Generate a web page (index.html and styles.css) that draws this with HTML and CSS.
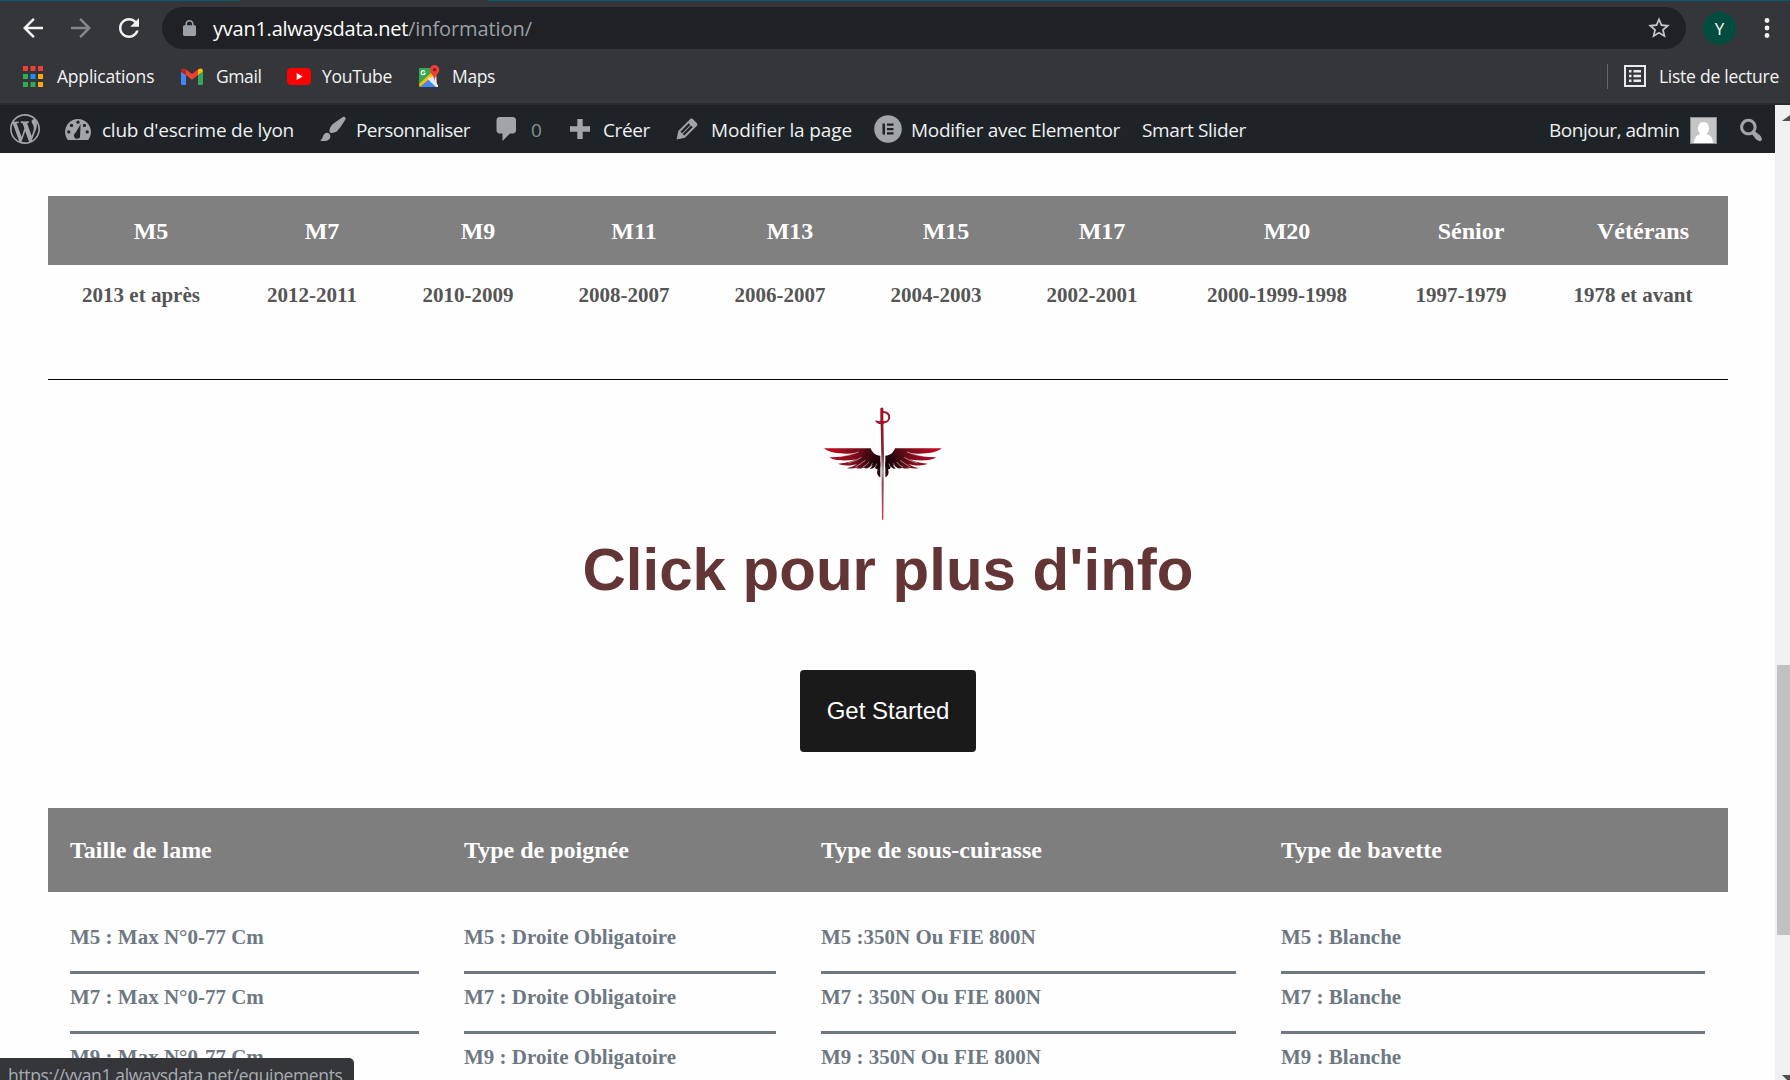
FILE: index.html
```html
<!DOCTYPE html>
<html lang="fr">
<head>
<meta charset="utf-8">
<title>Information – club d'escrime de lyon</title>
<link rel="stylesheet" href="styles.css">
</head>
<body>
<header class="browser">
  <div class="tabstrip"><i></i><b></b></div>
  <div class="toolbar">
    <svg class="nav" viewBox="0 0 24 24"><path fill="#f1f3f4" d="M20 11H7.83l5.59-5.59L12 4l-8 8 8 8 1.41-1.41L7.83 13H20v-2z"/></svg>
    <svg class="nav forward" viewBox="0 0 24 24"><path fill="#85868a" d="M4 11h12.17l-5.59-5.59L12 4l8 8-8 8-1.41-1.41L16.17 13H4v-2z"/></svg>
    <svg class="nav reload" viewBox="0 0 24 24"><path fill="#f1f3f4" d="M17.65 6.35C16.2 4.9 14.21 4 12 4c-4.42 0-7.99 3.58-7.99 8s3.57 8 7.99 8c3.73 0 6.84-2.55 7.73-6h-2.08c-.82 2.33-3.04 4-5.65 4-3.31 0-6-2.69-6-6s2.69-6 6-6c1.66 0 3.14.69 4.22 1.78L13 11h7V4l-2.35 2.35z"/></svg>
    <div class="omnibox">
      <svg class="lock" viewBox="4 1 16 21" preserveAspectRatio="none"><path fill="#9aa0a6" d="M18 8h-1V6c0-2.76-2.24-5-5-5S7 3.24 7 6v2H6c-1.1 0-2 .9-2 2v10c0 1.1.9 2 2 2h12c1.1 0 2-.9 2-2V10c0-1.1-.9-2-2-2zM8.9 6c0-1.71 1.39-3.1 3.1-3.1s3.1 1.39 3.1 3.1v2H8.9V6z"/></svg>
      <span class="host">yvan1.alwaysdata.net</span><span class="path">/information/</span>
      <svg class="star" viewBox="0 0 24 24"><path fill="#c4c7ca" d="M22 9.24l-7.19-.62L12 2 9.19 8.63 2 9.24l5.46 4.73L5.82 21 12 17.27 18.18 21l-1.63-7.03L22 9.24zM12 15.4l-3.76 2.27 1-4.28-3.32-2.88 4.38-.38L12 6.1l1.71 4.04 4.38.38-3.32 2.88 1 4.28L12 15.4z"/></svg>
    </div>
    <span class="profile">Y</span>
    <svg class="dots" viewBox="0 0 6 22"><g fill="#f1f3f4"><circle cx="3" cy="3.5" r="2.4"/><circle cx="3" cy="11" r="2.4"/><circle cx="3" cy="18.5" r="2.4"/></g></svg>
  </div>
  <nav class="bookmarks">
    <svg class="apps" viewBox="0 0 20 21"><g fill="#ea4335"><path d="M0 0h5v5H0zM7.5 0h5v5h-5zM15 0h5v5h-5z"/></g><path fill="#34a853" d="M0 8h5v5H0zM0 16h5v5H0zM7.500 16h5v5h-5z"/><path fill="#1a90ff" d="M7.500 8h5v5h-5z"/><path fill="#fba80b" d="M15 8h5v5h-5zM15 16h5v5h-5z"/></svg>
    <span class="bm-apps">Applications</span>
    <svg class="gmail" viewBox="0 0 22 17"><path fill="#4285f4" d="M0 3.500V15.500Q0 17 1.500 17H5V7z"/><path fill="#34a853" d="M22 3.500V15.500Q22 17 20.500 17H17V7z"/><path fill="#ea4335" d="M5 1.500l6 4.600 6-4.600V7l-6 4.700L5 7z"/><path fill="#c5221f" d="M0 3.300C0 .5 2.600-.6 5 1.500V7L0 3.500z"/><path fill="#fbbc04" d="M22 3.300C22 .5 19.400-.6 17 1.500V7l5-3.500z"/></svg>
    <span class="bm-gmail">Gmail</span>
    <svg class="youtube" viewBox="0 0 24 17"><rect width="24" height="17" rx="4.200" fill="#f00"/><path fill="#fff" d="M9.700 5l6 3.500-6 3.500z"/></svg>
    <span class="bm-youtube">YouTube</span>
    <svg class="maps" viewBox="0 0 22 23"><path fill="#34a853" d="M2 3h13v9L1 22V4q0-1 1-1z"/><path fill="#4285f4" d="M2 22l8.500-8L19 22z"/><path fill="#e8eaed" d="M12 13l6-6 1 14.500z"/><path fill="#fbbc04" d="M1 19L14 7l2.500 2.500L2 22z"/><path fill="#e8eaed" d="M9.500 14l2-2L20 20v2h-2z"/><path fill="none" stroke="#fff" stroke-width="1.200" d="M6.800 6.500a2 2 0 1 0 .3 1.800H5.500"/><path fill="#ea4335" d="M16.500 0a4.800 4.800 0 0 1 4.800 4.800c0 3.700-4.200 5-4.800 11-.6-6-4.800-7.300-4.800-11A4.800 4.800 0 0 1 16.500 0z"/><circle cx="16.500" cy="4.800" r="1.700" fill="#8c1d18"/></svg>
    <span class="bm-maps">Maps</span>
    <span class="reading">
      <svg viewBox="0 0 22 22"><rect x="1" y="1" width="20" height="20" fill="none" stroke="#e8eaed" stroke-width="2"/><path fill="#e8eaed" d="M5 5h2.500v2.500H5zM9.500 5H17v2.500H9.500zM5 9.800h2.500v2.500H5zM9.500 9.800H17v2.500H9.500zM5 14.600h2.500v2.500H5zM9.500 14.600H17v2.500H9.500z"/></svg>
      <span class="bm-list">Liste de lecture</span>
    </span>
  </nav>
</header>
<div class="viewport">
  <div class="page">
    <nav class="adminbar">
      <svg class="wp" viewBox="0 0 20 20"><path d="M20 10c0-5.510-4.490-10-10-10C4.480 0 0 4.490 0 10c0 5.520 4.480 10 10 10 5.510 0 10-4.480 10-10zM7.780 15.370L4.370 6.220c.55-.02 1.170-.08 1.170-.08.5-.06.44-1.130-.06-1.110 0 0-1.450.11-2.370.11-.18 0-.37 0-.58-.01C4.120 2.690 6.870 1.110 10 1.110c2.330 0 4.450.87 6.050 2.340-.68-.11-1.650.39-1.650 1.580 0 .74.45 1.360.9 2.100.35.61.55 1.360.55 2.460 0 1.490-1.400 5-1.400 5l-3.030-8.370c.54-.02.82-.17.82-.17.5-.05.44-1.250-.06-1.220 0 0-1.440.12-2.380.12-.87 0-2.330-.12-2.330-.12-.5-.03-.56 1.200-.06 1.220l.92.08 1.260 3.410zM17.410 10c.24-.64.74-1.870.43-4.250.7 1.290 1.050 2.710 1.050 4.250 0 3.290-1.730 6.240-4.400 7.780.97-2.590 1.940-5.200 2.920-7.780zM6.100 18.090C3.120 16.650 1.110 13.530 1.110 10c0-1.300.23-2.480.72-3.590C3.250 10.300 4.670 14.200 6.100 18.090zm4.030-6.630l2.580 6.980c-.86.29-1.760.45-2.710.45-.79 0-1.570-.11-2.290-.33.81-2.380 1.620-4.740 2.420-7.100z"/></svg>
      <svg class="dash" viewBox="2 4 16 13"><path d="M3.760 17h12.480c1.100-1.370 1.760-3.110 1.760-5 0-4.420-3.580-8-8-8s-8 3.580-8 8c0 1.890.66 3.630 1.760 5z"/><g fill="#1d2327"><circle cx="10" cy="6" r="1"/><circle cx="6" cy="8" r="1"/><circle cx="14" cy="8" r="1"/><circle cx="4.300" cy="12" r="1"/><circle cx="15.700" cy="12" r="1"/><path d="M11.600 7.200l-.3 6.800a1.900 1.900 0 1 1-2.900-1.300z"/></g></svg>
      <span class="ab-site">club d'escrime de lyon</span>
      <svg class="i30 brush" viewBox="0 0 20 20"><path d="M18.330 3.570s.27-.8-.31-1.360c-.53-.52-1.220-.24-1.220-.24-.61.3-5.760 3.470-7.670 5.570-.86.96-2.060 3.790-1.090 4.820.92.98 3.960-.17 4.790-1 2.060-2.060 5.210-7.170 5.500-7.790zM1.400 17.650c2.370-1.560 1.460-3.410 3.230-4.640.93-.65 2.220-.62 3.080.29.63.67.8 2.570-.16 3.460-1.570 1.450-4 1.550-6.150.89z"/></svg>
      <span class="ab-perso">Personnaliser</span>
      <svg class="i30 comment" viewBox="0 0 20 20"><path d="M5 2h9c1.100 0 2 .9 2 2v7c0 1.100-.9 2-2 2h-2l-5 5v-5H5c-1.100 0-2-.9-2-2V4c0-1.100.9-2 2-2z"/></svg>
      <span class="ab-count">0</span>
      <svg class="plus" viewBox="0 0 20 20"><path d="M7.300 0h5.400v7.300H20v5.400h-7.300V20H7.300v-7.300H0V7.300h7.300z"/></svg>
      <span class="ab-new">Créer</span>
      <svg class="i30 pencil" viewBox="0 0 20 20"><path d="M13.890 3.390l2.710 2.720c.46.46.42 1.240.03 1.640l-8.010 8.020-5.560 1.160 1.160-5.580s7.600-7.630 7.990-8.030c.39-.39 1.220-.39 1.680.07zm-2.730 2.790l-5.590 5.610 1.110 1.110 5.540-5.650zm-2.970 8.230l5.580-5.600-1.070-1.080-5.590 5.600z"/></svg>
      <span class="ab-edit">Modifier la page</span>
      <svg class="elementor" viewBox="0 0 28 28"><circle cx="14" cy="14" r="13.800"/><path fill="#1d2327" d="M8.500 8.500h2.500v11H8.500zM13 8.500h6.500v2.300H13zM13 12.900h6.500v2.300H13zM13 17.200h6.500v2.300H13z"/></svg>
      <span class="ab-elem">Modifier avec Elementor</span>
      <span class="ab-smart">Smart Slider</span>
      <span class="account"><span class="ab-hello">Bonjour, admin</span>
        <svg class="avatar" viewBox="0 0 27 27"><rect width="27" height="27" fill="#8c8f94"/><rect x="1" y="1" width="25" height="25" fill="#c5c5c5"/><path fill="#fff" d="M4 26c0-5 2.500-8 6.300-9C6.200 13 7.500 5 13.500 5s7.300 8 3.200 12c3.800 1 6.300 4 6.300 9z"/></svg>
        <svg class="i30" viewBox="0 0 20 20"><path d="M12.140 4.180c1.870 1.870 2.110 4.750.72 6.890.12.1.22.21.36.31.2.16.47.36.81.59.34.24.56.39.66.47.42.31.73.57.94.78.32.32.6.65.84 1 .25.35.44.69.59 1.040.14.35.21.68.18 1-.02.32-.14.59-.36.81s-.49.34-.81.36c-.31.02-.65-.04-.99-.19-.35-.14-.7-.34-1.040-.59-.35-.24-.68-.52-1-.84-.21-.21-.47-.52-.77-.93-.1-.13-.25-.35-.47-.66-.22-.32-.4-.57-.56-.78-.16-.2-.29-.35-.44-.5-2.070 1.090-4.690.76-6.440-.98-2.140-2.150-2.140-5.640 0-7.780 2.150-2.150 5.630-2.150 7.780 0zm-1.410 6.360c1.360-1.370 1.360-3.580 0-4.950-1.370-1.370-3.590-1.370-4.950 0-1.370 1.370-1.370 3.580 0 4.950 1.360 1.370 3.580 1.370 4.950 0z"/></svg>
      </span>
    </nav>
    <main>
      <div class="ages head"><span>M5</span><span>M7</span><span>M9</span><span>M11</span><span>M13</span><span>M15</span><span>M17</span><span>M20</span><span>Sénior</span><span>Vétérans</span></div>
      <div class="ages years"><span>2013 et après</span><span>2012-2011</span><span>2010-2009</span><span>2008-2007</span><span>2006-2007</span><span>2004-2003</span><span>2002-2001</span><span>2000-1999-1998</span><span>1997-1979</span><span>1978 et avant</span></div>
      <section class="cta">
        <svg class="logo" viewBox="0 0 480 390">
          <defs>
            <radialGradient id="wing" gradientUnits="userSpaceOnUse" cx="248" cy="205" r="175"><stop offset="0" stop-color="#120508"/><stop offset=".2" stop-color="#2c070d"/><stop offset=".5" stop-color="#7d0c1b"/><stop offset="1" stop-color="#c60a22"/></radialGradient>
            <linearGradient id="blade" x1="0" y1="0" x2="0" y2="1"><stop offset="0" stop-color="#8f1020"/><stop offset=".3" stop-color="#7a2a35"/><stop offset=".5" stop-color="#a8a0a2"/><stop offset=".62" stop-color="#8c4a54"/><stop offset="1" stop-color="#cf3a4e"/></linearGradient>
            <g id="half" fill="url(#wing)">
              <path d="M72 160H212C216 172 226 182 241 182V247C232 242 229 232 233 224L212 206 178 174C140 178 92 178 72 160z"/>
              <path d="M88 187C120 187 150 180 178 171L204 180 188 190C160 196 108 202 88 187z"/>
              <path d="M114 206C145 205 168 194 190 181L208 190 192 200C172 210 134 216 114 206z"/>
              <path d="M140 219C166 215 180 200 200 185L214 196C200 208 166 226 140 219z"/>
              <path d="M168 219C186 214 198 202 206 192L216 200C206 214 184 225 168 219zM192 219C204 213 208 204 212 196L222 202C217 214 204 224 192 219zM210 221C218 214 220 206 221 198L230 203C228 214 219 223 210 221zM226 222C231 215 232 208 233 200H241V215C237 220 232 223 226 222z"/>
              <path fill="none" stroke="#fff" stroke-width="1.500" d="M118 185Q150 182 176 171M145 204Q168 198 184 187M166 216Q184 206 196 196M188 217Q202 209 207 201M206 219Q215 212 217 205M222 220Q229 213 230 206"/>
            </g>
          </defs>
          <use href="#half"/><use href="#half" transform="matrix(-1 0 0 1 497 0)"/>
          <path fill="#fff" d="M243 172h11l-2 80h-7z"/>
          <path fill="url(#blade)" d="M242 86h8l2 100-2 188h-4l-2-188z"/>
          <path fill="#a61225" d="M241 40q5-5 9 0v42h-9z"/>
          <path fill="none" stroke="#a61225" stroke-width="6" d="M249 51c26 1 23 30 3 31"/>
          <path fill="#a61225" d="M225 76c8 4 18 2 28 1l-1 10c-12 2-24 0-27-11z"/>
        </svg>
        <h1>Click pour plus d'info</h1>
        <button class="start">Get Started</button>
      </section>
      <div class="gear titles"><span>Taille de lame</span><span>Type de poignée</span><span>Type de sous-cuirasse</span><span>Type de bavette</span></div>
      <div class="gear rows">
        <ul><li>M5 : Max N°0-77 Cm</li><li>M7 : Max N°0-77 Cm</li><li>M9 : Max N°0-77 Cm</li></ul>
        <ul><li>M5 : Droite Obligatoire</li><li>M7 : Droite Obligatoire</li><li>M9 : Droite Obligatoire</li></ul>
        <ul><li>M5 :350N Ou FIE 800N</li><li>M7 : 350N Ou FIE 800N</li><li>M9 : 350N Ou FIE 800N</li></ul>
        <ul><li>M5 : Blanche</li><li>M7 : Blanche</li><li>M9 : Blanche</li></ul>
      </div>
    </main>
  </div>
  <div class="scrollbar"><i class="up"></i><i class="thumb"></i><i class="down"></i></div>
</div>
<div class="status">https://yvan1.alwaysdata.net/equipements</div>
</body>
</html>
```
FILE: styles.css
```css
* { box-sizing: border-box; }
html, body { height: 100%; }
body {
  margin: 0;
  height: 1080px;
  overflow: hidden;
  display: flex;
  flex-direction: column;
  background: #fefefe;
  font-family: "Open Sans", "Noto Sans", sans-serif;
}
svg { display: block; flex: none; overflow: visible; }
span { white-space: nowrap; flex: none; }

/* Browser window */
.browser { height: 105px; flex: none; background: #35363a; border-bottom: 2px solid #2a2b2d; }
.tabstrip { height: 1px; display: flex; justify-content: space-between; }
.tabstrip i { width: 239px; background: #0b5a6a; }
.tabstrip b { width: 1302px; background: #0b5a6a; }
.toolbar { height: 54px; display: flex; align-items: center; padding-left: 18px; }
.nav { width: 30px; height: 30px; }
.forward { margin-left: 18px; }
.reload { margin-left: 18px; }
.omnibox {
  margin-left: 18px; width: 1524px; height: 42px; flex: none;
  border-radius: 21px; background: #202124;
  display: flex; align-items: center; padding: 0 14px 0 21px;
  font-size: 20px;
}
.lock { width: 13px; height: 16px; }
.host { margin-left: 17px; width: 195px; color: #fff; letter-spacing: -.24px; }
.path { color: #9aa0a6; letter-spacing: -.08px; }
.star { width: 26px; height: 26px; margin-left: auto; }
.profile {
  margin-left: 17px; width: 33px; height: 33px; border-radius: 50%;
  background: #004d40; color: #fff; font-size: 17px; line-height: 33px; text-align: center;
}
.dots { width: 6px; height: 22px; margin-left: 28px; }
.bookmarks { height: 42px; display: flex; align-items: center; padding-left: 23px; font-size: 17.5px; color: #f1f3f4; }
.bookmarks > span, .bm-list { padding-bottom: 1px; letter-spacing: -.2px; }
.apps { width: 20px; height: 21px; }
.bm-apps { margin-left: 14px; width: 98px; }
.gmail { width: 22px; height: 17px; margin-left: 26px; }
.bookmarks > .bm-gmail { margin-left: 13px; width: 45px; letter-spacing: -.4px; }
.youtube { width: 24px; height: 17px; margin-left: 26px; }
.bookmarks > .bm-youtube { margin-left: 11px; width: 70px; letter-spacing: -.28px; }
.maps { width: 22px; height: 23px; margin-left: 26px; }
.bookmarks > .bm-maps { margin-left: 12px; width: 43px; letter-spacing: -.35px; }
.bookmarks > .reading {
  margin-left: auto; height: 25px; padding: 0 0 0 16px; border-left: 1px solid #65676b;
  display: flex; align-items: center; width: 183px;
}
.reading svg { width: 22px; height: 22px; }
.bm-list { margin-left: 13px; letter-spacing: -.26px; }

/* Page area and scrollbar */
.viewport { display: flex; height: 975px; flex: none; }
.page { width: 1775px; height: 975px; overflow: hidden; }
.scrollbar { width: 15px; background: #f0f0f0; display: flex; flex-direction: column; overflow: hidden; }
.scrollbar i { display: block; flex: none; }
.up { margin: 10px 0 0 7px; width: 0; border: 8px solid transparent; border-top: 0; border-bottom: 6px solid #505050; }
.thumb { margin: 544px 0 0 2px; height: 270px; background: #c1c1c1; }
.down { margin: 140px 0 0 7px; width: 0; border: 8px solid transparent; border-bottom: 0; border-top: 8px solid #505050; }

/* WordPress admin bar */
.adminbar {
  height: 48px; background: #1d2327; color: #f0f0f1; font-size: 19px;
  display: flex; align-items: center; padding-left: 10px;
}
.adminbar svg { fill: #a0a5aa; }
.adminbar > span, .ab-hello { padding-top: 1px; }
.wp { width: 30px; height: 30px; }
.dash { width: 26px; height: 21px; margin-left: 25px; }
.ab-site { margin-left: 11px; width: 192px; letter-spacing: -.23px; }
.i30 { width: 30px; height: 30px; }
.brush { margin-left: 24px; }
.ab-perso { margin-left: 8px; width: 114px; letter-spacing: -.56px; }
.comment { margin-left: 22px; }
.ab-count { margin-left: 9px; width: 11px; color: #8c9196; }
.plus { width: 20px; height: 20px; margin-left: 28px; }
.ab-new { margin-left: 13px; width: 47px; letter-spacing: -.37px; }
.pencil { margin-left: 22px; }
.ab-edit { margin-left: 9px; width: 141px; letter-spacing: -.12px; }
.elementor { width: 28px; height: 28px; margin-left: 22px; }
.ab-elem { margin-left: 9px; width: 209px; letter-spacing: -.31px; }
.ab-smart { margin-left: 22px; width: 104px; letter-spacing: -.34px; }
.account { margin-left: auto; display: flex; align-items: center; width: 226px; }
.ab-hello { width: 130px; letter-spacing: -.48px; }
.avatar { width: 27px; height: 27px; margin: 1px 19px 0 11px; }

/* Content */
main { padding: 43px 47px 0 48px; font-family: "Liberation Serif", "Times New Roman", serif; font-weight: 700; }
.ages { display: grid; grid-template-columns: 186px repeat(6, 156px) 214px 154px 190px; text-align: center; }
.head { height: 69px; background: #808080; color: #fff; font-size: 24px; line-height: 71px; }
.head span { padding-left: 20px; }
.years { height: 115px; border-bottom: 1px solid #000; color: #555; font-size: 21px; line-height: 60px; }
.cta { height: 428px; display: flex; flex-direction: column; align-items: center; font-family: "Liberation Sans", Arial, sans-serif; }
.logo { width: 160px; height: 130px; margin: 15px 16px 0 0; }
h1 { margin: 8px 0 0; color: #633535; font-size: 60px; line-height: 74px; }
.start {
  margin-top: 63px; width: 176px; height: 82px; border: 0; border-radius: 4px;
  background: #1a1a1a; color: #fff; font: 24px "Liberation Sans", Arial, sans-serif;
}
.gear { display: grid; grid-template-columns: 394px 357px 460px 469px; }
.titles { height: 84px; background: #7e7e7e; color: #fff; font-size: 24px; line-height: 85px; }
.titles span { padding-left: 22px; }
ul { list-style: none; margin: 0; padding: 22px 23px 0 22px; }
li { height: 60px; border-bottom: 3px solid #6d7882; color: #6d7882; font-size: 21px; line-height: 46px; }

/* Link preview */
.status {
  position: absolute; left: 0; bottom: 0; width: 354px; height: 22px; overflow: hidden;
  background: #35363a; border-top-right-radius: 5px; color: #a9adb2; white-space: nowrap;
  font-size: 17.5px; line-height: 24px; padding: 5px 0 0 8px; letter-spacing: -.35px;
}
```
